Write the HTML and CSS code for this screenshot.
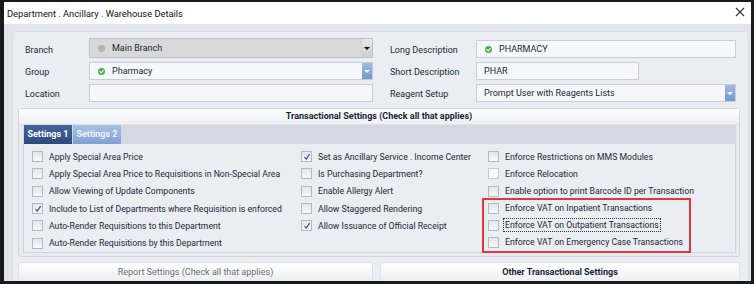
FILE: index.html
```html
<!DOCTYPE html>
<html lang="en">
<head>
  <meta charset="UTF-8">
  <title>Department . Ancillary . Warehouse Details</title>
  <link rel="stylesheet" href="styles.css">
</head>
<body>
  <div class="window">
    <div class="titlebar">
      <span class="title">Department . Ancillary . Warehouse Details</span>
      <svg class="close" width="10" height="10" viewBox="0 0 10 10"><path d="M1 1 L9 9 M9 1 L1 9" stroke="#333" stroke-width="1.1" fill="none"/></svg>
    </div>
    <div class="body">
      <div class="panel">
        <div class="form">
          <label>Branch</label>
          <div class="combo disabled"><span class="dot gray"></span><span class="val">Main Branch</span><span class="drop dark"></span></div>
          <label class="rlabel">Long Description</label>
          <div class="box"><span class="dot green"></span><span class="val">PHARMACY</span></div>

          <label>Group</label>
          <div class="combo"><span class="dot green"></span><span class="val">Pharmacy</span><span class="drop"></span></div>
          <label class="rlabel">Short Description</label>
          <div class="box short"><span class="val">PHAR</span></div>

          <label>Location</label>
          <div class="box"></div>
          <label class="rlabel">Reagent Setup</label>
          <div class="combo"><span class="val">Prompt User with Reagents Lists</span><span class="drop"></span></div>
        </div>

        <div class="group">
          <div class="group-head">Transactional Settings (Check all that applies)</div>
          <div class="tabs">
            <div class="tabstrip">
              <span class="tab active">Settings 1</span>
              <span class="tab">Settings 2</span>
            </div>
            <div class="tab-body">
              <div class="cbcol c1">
                <div class="cb"><span class="chk"></span>Apply Special Area Price</div>
                <div class="cb"><span class="chk"></span>Apply Special Area Price to Requisitions in Non-Special Area</div>
                <div class="cb"><span class="chk"></span>Allow Viewing of Update Components</div>
                <div class="cb"><span class="chk on"><svg width="8" height="8" viewBox="0 0 8 8"><path d="M1.5 4 L3.2 6.2 L6.6 1.2" stroke="#3a5a8e" stroke-width="1.2" fill="none"/></svg></span>Include to List of Departments where Requisition is enforced</div>
                <div class="cb"><span class="chk"></span>Auto-Render Requisitions to this Department</div>
                <div class="cb"><span class="chk"></span>Auto-Render Requisitions by this Department</div>
              </div>
              <div class="cbcol c2">
                <div class="cb"><span class="chk on"><svg width="8" height="8" viewBox="0 0 8 8"><path d="M1.5 4 L3.2 6.2 L6.6 1.2" stroke="#3a5a8e" stroke-width="1.2" fill="none"/></svg></span>Set as Ancillary Service . Income Center</div>
                <div class="cb"><span class="chk"></span>Is Purchasing Department?</div>
                <div class="cb"><span class="chk"></span>Enable Allergy Alert</div>
                <div class="cb"><span class="chk"></span>Allow Staggered Rendering</div>
                <div class="cb"><span class="chk on"><svg width="8" height="8" viewBox="0 0 8 8"><path d="M1.5 4 L3.2 6.2 L6.6 1.2" stroke="#3a5a8e" stroke-width="1.2" fill="none"/></svg></span>Allow Issuance of Official Receipt</div>
              </div>
              <div class="cbcol c3">
                <div class="cb"><span class="chk"></span>Enforce Restrictions on MMS Modules</div>
                <div class="cb"><span class="chk hover"></span>Enforce Relocation</div>
                <div class="cb"><span class="chk"></span>Enable option to print Barcode ID per Transaction</div>
                <div class="highlight">
                  <div class="cb"><span class="chk"></span>Enforce VAT on Inpatient Transactions</div>
                  <div class="cb"><span class="chk"></span><span class="focus">Enforce VAT on Outpatient Transactions</span></div>
                  <div class="cb"><span class="chk"></span>Enforce VAT on Emergency Case Transactions</div>
                </div>
              </div>
            </div>
          </div>
        </div>

        <div class="bottom">
          <div class="band muted report">Report Settings (Check all that applies)</div>
          <div class="band">Other Transactional Settings</div>
        </div>
      </div>
    </div>
  </div>
</body>
</html>
```

FILE: styles.css
```css
body {
  margin: 0;
  background: #1a1a1a;
  font-family: Roboto, "Liberation Sans", sans-serif;
  font-size: 9px;
  color: #1c2838;
}
.window {
  margin: 2px 3px 0 4px;
  height: 279px;
  background: #e2e5eb;
  overflow: hidden;
  display: flex;
  flex-direction: column;
}
.titlebar {
  height: 22px;
  background: #fff;
  display: flex;
  align-items: center;
  justify-content: space-between;
  padding: 0 6px 0 3px;
  flex-shrink: 0;
}
.title {
  font-size: 9.3px;
  color: #111;
}
.close {
  margin-top: -2px;
}
.body {
  padding: 7px 2px 0 8px;
  flex: 1;
}
.panel {
  background: #eaedf2;
  border: 1px solid #d9dde4;
  border-radius: 4px;
  height: 100%;
  padding: 8px 8px 0 5px;
}
.form {
  display: grid;
  grid-template-columns: 64px 284px 103px 260px;
  grid-auto-rows: 18px;
  row-gap: 4px;
  padding-left: 7px;
  align-items: center;
}
.form label {
  padding-top: 2px;
}
.rlabel {
  padding-left: 17px;
}
.box, .combo {
  height: 18px;
  box-sizing: border-box;
  border: 1px solid #c8ced8;
  background: #f5f7fb;
  display: flex;
  align-items: center;
  padding-left: 5px;
}
.box.short {
  width: 163px;
}
.combo {
  padding-right: 0;
}
.combo.disabled {
  background: #d8d8d8;
  border-color: #bfc3c9;
  height: 20px;
  margin-top: -2px;
}
.val {
  flex: 1;
  padding-left: 2px;
}
.dot {
  width: 7px;
  height: 7px;
  border-radius: 50%;
  margin: 0 5px 0 3px;
  position: relative;
}
.dot.gray {
  background: #b4b4b4;
}
.dot.green {
  background: #4cae4c;
}
.dot.green::after {
  content: "";
  position: absolute;
  left: 2px;
  top: 1px;
  width: 2px;
  height: 3px;
  border: solid #fff;
  border-width: 0 1px 1px 0;
  transform: rotate(40deg);
}
.drop {
  width: 10px;
  height: 100%;
  background: linear-gradient(#a3bde3, #7097cc);
  position: relative;
}
.drop::after {
  content: "";
  position: absolute;
  left: 2px;
  top: 7px;
  border: 3px solid transparent;
  border-top: 3px solid #fff;
}
.drop.dark {
  background: linear-gradient(#e8e8e8, #cfcfcf);
}
.drop.dark::after {
  top: 8px;
  border-top-color: #111;
}
.group {
  margin-top: 6px;
  border: 1px solid #d0d6df;
  border-radius: 3px;
  background: #e7eaf0;
  padding-bottom: 3px;
}
.group-head {
  height: 15px;
  line-height: 15px;
  text-align: center;
  font-weight: bold;
  color: #1b2536;
  background: linear-gradient(#fdfdfe, #eef0f4);
  border-bottom: 1px solid #dde1e7;
}
.tabs {
  padding: 0 3px 0 4px;
}
.tabstrip {
  height: 19px;
  background: #d3d9e3;
  display: flex;
  padding-left: 1px;
}
.tab {
  width: 48px;
  text-align: center;
  line-height: 19px;
  color: #eef3fb;
  font-weight: bold;
  background: linear-gradient(#a9c1e6, #7f9fd2);
  border-right: 1px solid #d3d9e3;
}
.tab.active {
  background: linear-gradient(#45659a, #2b4a7c);
  color: #fff;
}
.tab-body {
  height: 109px;
  box-sizing: border-box;
  background: #eaedf2;
  border: 1px solid #cfd5df;
  border-top: none;
  display: flex;
  align-items: flex-start;
  padding: 4px 0 0 8px;
  font-size: 8.7px;
}
.cbcol {
  display: flex;
  flex-direction: column;
}
.c1 {
  width: 269px;
}
.c2 {
  width: 187px;
}
.cb {
  height: 17.3px;
  flex-shrink: 0;
  display: flex;
  align-items: center;
  white-space: nowrap;
}
.chk {
  width: 9px;
  height: 9px;
  border: 1px solid #b3bac5;
  background: linear-gradient(#e3e6eb, #f6f7f9);
  margin-right: 6px;
  display: flex;
  align-items: center;
  justify-content: center;
  flex-shrink: 0;
}
.chk.hover {
  background: #fbfbfc;
  border-color: #c4c9d1;
}
.highlight {
  flex-shrink: 0;
  margin: -2px 0 0 -6px;
  width: 201px;
  border: 2px solid #e0383c;
  padding-left: 4px;
}
.highlight .cb {
  height: 17px;
}
.focus {
  outline: 1px dotted #333;
  outline-offset: 1px;
}
.bottom {
  margin-top: 5px;
  display: flex;
  gap: 7px;
}
.band {
  flex: 1;
  height: 22px;
  line-height: 18px;
  text-align: center;
  font-weight: bold;
  color: #1b2536;
  background: linear-gradient(#ffffff, #e9ecf0);
  border: 1px solid #dde1e7;
  border-radius: 3px 3px 0 0;
}
.band.report {
  flex: 0 0 355px;
  box-sizing: border-box;
}
.band.muted {
  color: #6a7079;
  font-weight: normal;
}
```
